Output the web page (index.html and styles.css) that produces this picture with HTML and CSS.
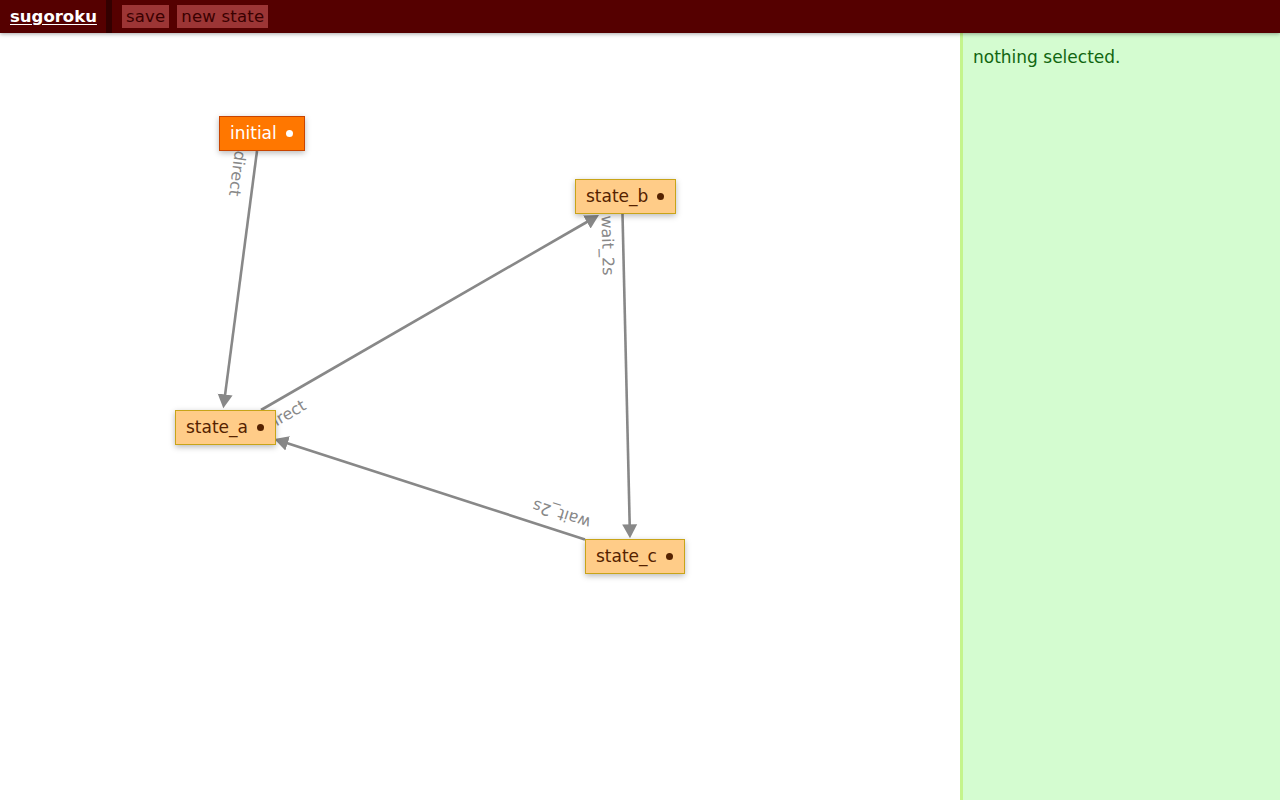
FILE: index.html
```html
<!DOCTYPE html>
<html>
<head>
<meta charset="utf-8">
<title>sugoroku</title>
<link rel="stylesheet" href="styles.css">
</head>
<body>
<header class="topbar">
  <a class="logo" href="#">sugoroku</a>
  <span class="divider"></span>
  <nav class="actions">
    <button class="btn">save</button>
    <button class="btn">new state</button>
  </nav>
</header>
<main class="main">
  <section class="canvas">
    <svg class="edges" width="960" height="767" viewBox="0 0 960 767">
      <defs>
        <marker id="arrow" markerUnits="userSpaceOnUse" markerWidth="16" markerHeight="16" viewBox="0 -8 16 16" refX="1" refY="0" orient="auto">
          <path d="M0,-7.5 L14,0 L0,7.5 z" fill="#888888"></path>
        </marker>
      </defs>
      <g class="edge">
        <line x1="257" y1="118" x2="224.99" y2="362.41" marker-end="url(#arrow)"></line>
        <text transform="translate(257 118) rotate(97.46)" x="2" y="22">direct</text>
      </g>
      <g class="edge">
        <line x1="261" y1="377" x2="587.74" y2="188.5" marker-end="url(#arrow)"></line>
        <text transform="translate(261 377) rotate(-29.98)" x="-5" y="22">direct</text>
      </g>
      <g class="edge">
        <line x1="622.5" y1="181" x2="629.7" y2="492.3" marker-end="url(#arrow)"></line>
        <text transform="translate(622.5 181) rotate(88.68)" x="1" y="21">wait_2s</text>
      </g>
      <g class="edge">
        <line x1="585" y1="506.5" x2="286.67" y2="410" marker-end="url(#arrow)"></line>
        <text transform="translate(585 506.5) rotate(197.93)" x="0" y="22">wait_2s</text>
      </g>
    </svg>
    <div class="node node-initial" style="left:219px; top:83px;">initial<span class="dot"></span></div>
    <div class="node" style="left:575px; top:146px;">state_b<span class="dot"></span></div>
    <div class="node" style="left:175px; top:377px;">state_a<span class="dot"></span></div>
    <div class="node" style="left:585px; top:506px;">state_c<span class="dot"></span></div>
  </section>
  <aside class="sidebar">
    <p class="status">nothing selected.</p>
  </aside>
</main>
</body>
</html>
```

FILE: styles.css
```css
html, body {
  margin: 0;
  padding: 0;
  height: 100%;
  overflow: hidden;
  background: #ffffff;
  font-family: "DejaVu Sans", "Liberation Sans", sans-serif;
}

.topbar {
  position: relative;
  z-index: 5;
  display: flex;
  align-items: stretch;
  height: 33px;
  background: #550000;
  box-shadow: 0 1px 4px rgba(0, 0, 0, 0.35);
}

.logo {
  display: flex;
  align-items: center;
  padding: 0 9px 0 10px;
  color: #ffffff;
  font-weight: bold;
  font-size: 16.5px;
  text-decoration: underline;
  text-underline-offset: 2px;
}

.divider {
  width: 6px;
  background: #330000;
}

.actions {
  display: flex;
  align-items: flex-start;
  gap: 8px;
  padding: 5px 0 0 10px;
}

.btn {
  height: 23px;
  padding: 0 4px;
  margin: 0;
  border: none;
  background: #9c3535;
  color: #3a0000;
  font-family: "DejaVu Sans", "Liberation Sans", sans-serif;
  font-size: 16.5px;
  letter-spacing: 0.2px;
  line-height: 23px;
  cursor: pointer;
}

.main {
  display: flex;
  height: calc(100% - 33px);
}

.canvas {
  position: relative;
  flex: 1;
  overflow: hidden;
}

.edges {
  position: absolute;
  left: 0;
  top: 0;
}

.edge line {
  stroke: #888888;
  stroke-width: 2.6;
}

.edge text {
  fill: #888888;
  font-family: "DejaVu Sans", "Liberation Sans", sans-serif;
  font-size: 16px;
}

.node {
  position: absolute;
  display: flex;
  align-items: center;
  height: 33px;
  padding: 0 11px 0 10px;
  background: #ffcc88;
  border: 1px solid #c8a418;
  color: #552200;
  font-size: 17px;
  line-height: 33px;
  white-space: nowrap;
  box-shadow: 0 2px 6px rgba(0, 0, 0, 0.28);
}

.node-initial {
  background: #ff7700;
  border-color: #c84400;
  color: #ffffff;
}

.dot {
  display: inline-block;
  width: 7px;
  height: 7px;
  margin-left: 9px;
  border-radius: 50%;
  background: currentColor;
}

.sidebar {
  box-sizing: border-box;
  flex: 0 0 320px;
  width: 320px;
  padding: 0 10px;
  background: #d4fcd0;
  border-left: 3px solid #c4f48c;
}

.status {
  margin: 14px 0 0;
  color: #116611;
  font-size: 17px;
  line-height: 20px;
}
```
